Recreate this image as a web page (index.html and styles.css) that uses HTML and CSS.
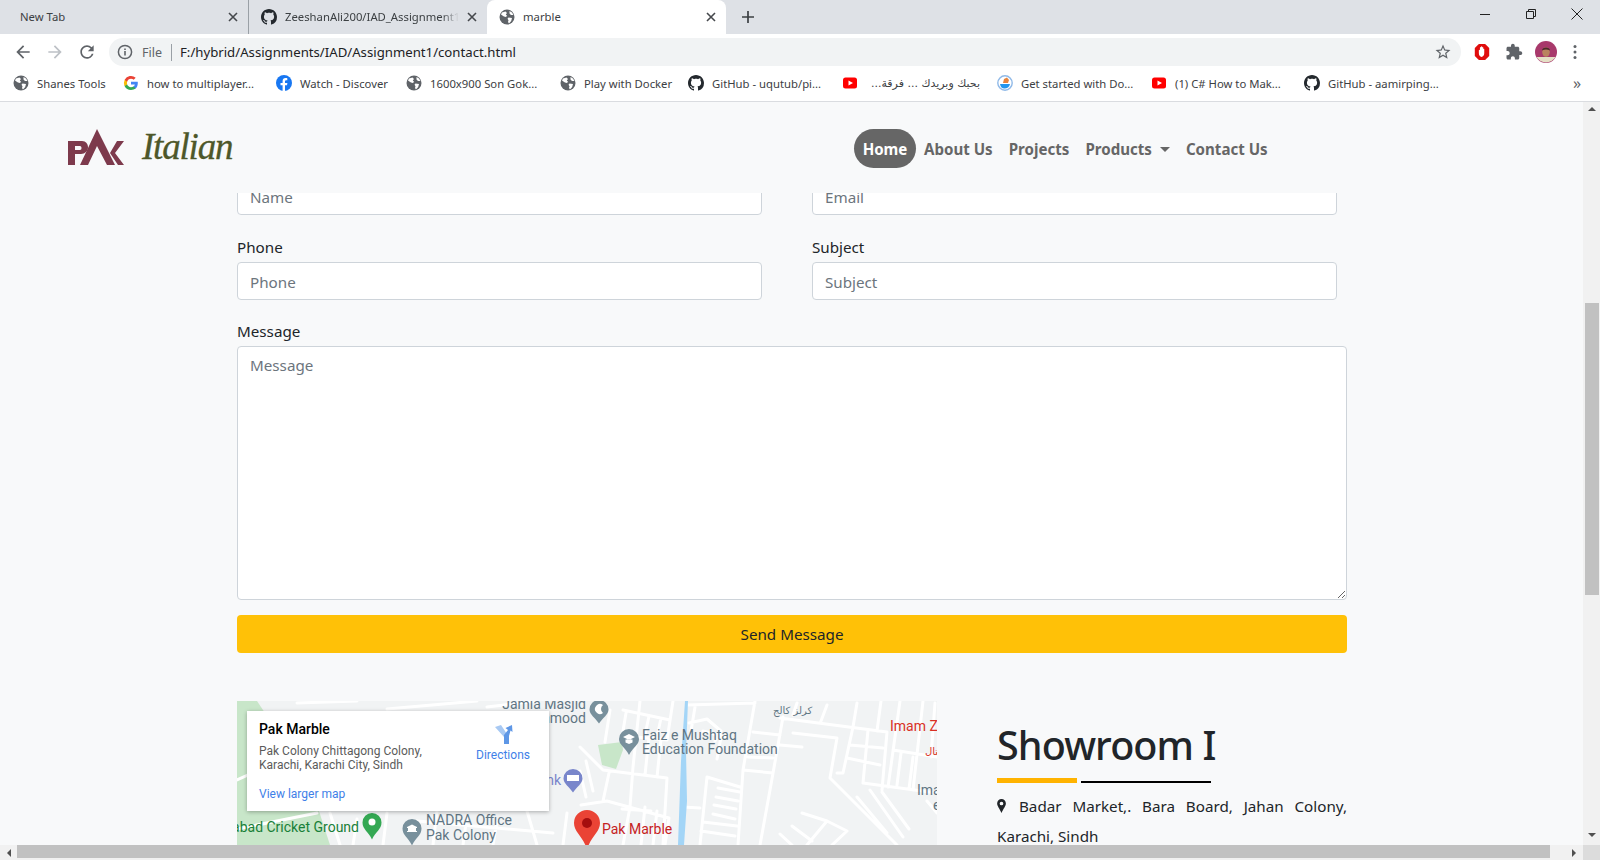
FILE: index.html
```html
<!DOCTYPE html>
<html lang="en">
<head>
<meta charset="utf-8">
<title>marble</title>
<link rel="stylesheet" href="styles.css">
</head>
<body>
<svg class="sprite" aria-hidden="true">
  <symbol id="globe" viewBox="0 0 16 16"><circle cx="8" cy="8" r="7.5" fill="#5f6368"/><path d="M3 3.500 6.500 2.500 8 4 6.800 5.500 8.200 7 6.500 8 4.500 7.200 2 5.500zM9.500 8.500 13 9 12.200 12 10 14.500 9 13 9.500 11.200 8.500 9.800zM10.500 2 13 3.500 14.500 6 12 6 10.500 4.500z" fill="#fff"/></symbol>
  <symbol id="gh" viewBox="0 0 16 16"><path fill="#24292e" d="M8 0C3.58 0 0 3.58 0 8c0 3.54 2.29 6.53 5.47 7.59.4.07.55-.17.55-.38 0-.19-.01-.82-.01-1.49-2.01.37-2.53-.49-2.69-.94-.09-.23-.48-.94-.82-1.13-.28-.15-.68-.52-.01-.53.63-.01 1.08.58 1.23.82.72 1.21 1.87.87 2.33.66.07-.52.28-.87.51-1.07-1.78-.2-3.64-.89-3.64-3.95 0-.87.31-1.59.82-2.15-.08-.2-.36-1.02.08-2.12 0 0 .67-.21 2.2.82.64-.18 1.32-.27 2-.27.68 0 1.36.09 2 .27 1.53-1.04 2.2-.82 2.2-.82.44 1.1.16 1.92.08 2.12.51.56.82 1.27.82 2.15 0 3.07-1.87 3.75-3.65 3.95.29.25.54.73.54 1.48 0 1.07-.01 1.93-.01 2.2 0 .21.15.46.55.38A8.013 8.013 0 0016 8c0-4.42-3.58-8-8-8z"/></symbol>
  <symbol id="yt" viewBox="0 0 16 16"><rect x="1" y="2.500" width="14" height="11" rx="2.500" fill="#f00"/><path d="M6.500 5.500v5L11 8z" fill="#fff"/></symbol>
  <symbol id="close" viewBox="0 0 10 10"><path d="M1 1l8 8M9 1l-8 8" stroke="#45484c" stroke-width="1.6" fill="none"/></symbol>
</svg>

<header class="browser">
  <div class="tabs">
    <div class="tab">
      <span class="tab-title">New Tab</span>
      <svg class="tab-x"><use href="#close"/></svg>
    </div>
    <div class="tab tab-sep">
      <svg class="ico16"><use href="#gh"/></svg>
      <span class="tab-title tab-fade">ZeeshanAli200/IAD_Assignment1</span>
      <svg class="tab-x"><use href="#close"/></svg>
    </div>
    <div class="tab tab-active">
      <svg class="ico16"><use href="#globe"/></svg>
      <span class="tab-title">marble</span>
      <svg class="tab-x"><use href="#close"/></svg>
    </div>
    <svg class="tab-plus" viewBox="0 0 12 12"><path d="M6 0v12M0 6h12" stroke="#3c4043" stroke-width="1.7"/></svg>
    <div class="winctl">
      <svg viewBox="0 0 12 12"><path d="M1 6.500h10" stroke="#222" stroke-width="1"/></svg>
      <svg viewBox="0 0 12 12"><path d="M1.500 3.500h7v7h-7zM3.500 3.500v-2h7v7h-2" stroke="#222" stroke-width="1" fill="none"/></svg>
      <svg viewBox="0 0 12 12"><path d="M.5.5l11 11M11.500.5l-11 11" stroke="#222" stroke-width="1" fill="none"/></svg>
    </div>
  </div>

  <div class="toolbar">
    <svg class="nav-ico" viewBox="0 0 24 24"><path fill="#5f6368" d="M20 11H7.83l5.59-5.59L12 4l-8 8 8 8 1.41-1.41L7.83 13H20v-2z"/></svg>
    <svg class="nav-ico" viewBox="0 0 24 24"><path fill="#bdc1c6" d="M4 11h12.170l-5.590-5.590L12 4l8 8-8 8-1.410-1.410L16.170 13H4v-2z"/></svg>
    <svg class="nav-ico" viewBox="0 0 24 24"><path fill="#5f6368" d="M17.65 6.35A7.958 7.958 0 0012 4c-4.42 0-7.99 3.58-7.99 8s3.57 8 7.99 8c3.73 0 6.84-2.55 7.73-6h-2.08A5.99 5.99 0 0112 18c-3.31 0-6-2.69-6-6s2.69-6 6-6c1.66 0 3.14.69 4.22 1.78L13 11h7V4l-2.35 2.35z"/></svg>
    <div class="omnibox">
      <svg class="ico16" viewBox="0 0 16 16"><circle cx="8" cy="8" r="6.600" fill="none" stroke="#5f6368" stroke-width="1.500"/><path d="M8 7v4.500M8 4.500v1.500" stroke="#5f6368" stroke-width="1.600"/></svg>
      <span class="omni-file">File</span>
      <span class="omni-sep"></span>
      <span class="omni-url">F:/hybrid/Assignments/IAD/Assignment1/contact.html</span>
      <svg class="omni-star" viewBox="0 0 24 24"><path fill="#5f6368" d="M22 9.24l-7.19-.62L12 2 9.19 8.63 2 9.24l5.46 4.73L5.82 21 12 17.27 18.18 21l-1.63-7.03L22 9.24zM12 15.4l-3.76 2.27 1-4.28-3.32-2.88 4.38-.38L12 6.1l1.71 4.04 4.38.38-3.32 2.88 1 4.28L12 15.4z"/></svg>
    </div>
    <div class="ext">
      <svg viewBox="0 0 18 20"><path d="M5.500 1h7L17 5.500v9L12.500 19h-7L1 14.500v-9z" fill="#e00d0d"/><path d="M5.500 8c0-.8 1-.8 1.200 0V5c0-.8 1.200-.8 1.200 0V4.200c0-.8 1.300-.8 1.300 0V5c0-.8 1.200-.8 1.200 0v2c0-.7 1.100-.7 1.100 0v4.500c0 2.200-1.300 4-3 4s-3-1.800-3-4z" fill="#fff"/></svg>
      <svg viewBox="0 0 24 24"><path fill="#5f6368" d="M20.5 11H19V7c0-1.100-.9-2-2-2h-4V3.500C13 2.120 11.880 1 10.500 1S8 2.120 8 3.500V5H4c-1.100 0-1.990.9-1.990 2v3.800H3.500c1.490 0 2.700 1.210 2.700 2.700s-1.210 2.700-2.700 2.700H2V20c0 1.100.9 2 2 2h3.800v-1.500c0-1.490 1.210-2.700 2.700-2.700 1.490 0 2.700 1.210 2.700 2.700V22H17c1.100 0 2-.9 2-2v-4h1.500c1.380 0 2.500-1.120 2.500-2.500S21.880 11 20.500 11z"/></svg>
      <svg class="avatar" viewBox="0 0 22 22"><circle cx="11" cy="11" r="11" fill="#a8396b"/><path d="M1.500 16h19a11 11 0 01-19 0z" fill="#e4dfc5"/><ellipse cx="11" cy="11" rx="3.800" ry="4.800" fill="#b9835f"/><path d="M7 9.500C7 5.500 15 5.500 15 9.500 12.500 8 9.500 8 7 9.500z" fill="#4a2a2a"/></svg>
      <svg class="dots" viewBox="0 0 4 16"><circle cx="2" cy="2.500" r="1.500" fill="#5f6368"/><circle cx="2" cy="8" r="1.500" fill="#5f6368"/><circle cx="2" cy="13.500" r="1.500" fill="#5f6368"/></svg>
    </div>
  </div>

  <div class="bookmarks">
    <div class="bm"><svg class="ico16"><use href="#globe"/></svg><span>Shanes Tools</span></div>
    <div class="bm"><svg class="ico16" viewBox="0 0 16 16"><path d="M14.800 8.200c0-.5 0-1-.1-1.400H8v2.700h3.800a3.300 3.300 0 01-1.400 2.100v1.800h2.300c1.300-1.300 2.100-3 2.100-5.200z" fill="#4285f4"/><path d="M8 15c1.900 0 3.500-.6 4.700-1.700l-2.300-1.800c-.6.400-1.400.7-2.400.7-1.800 0-3.400-1.200-3.900-2.900H1.700v1.900A7 7 0 008 15z" fill="#34a853"/><path d="M4.100 9.300a4.200 4.200 0 010-2.600V4.800H1.700a7 7 0 000 6.400z" fill="#fbbc05"/><path d="M8 3.800c1 0 2 .4 2.700 1l2-2A7 7 0 001.700 4.800l2.400 1.900C4.600 5 6.200 3.800 8 3.800z" fill="#ea4335"/></svg><span>how to multiplayer...</span></div>
    <div class="bm"><svg class="ico16" viewBox="0 0 16 16"><circle cx="8" cy="8" r="8" fill="#1877f2"/><path d="M11 10.300l.4-2.300H9V6.500c0-.7.300-1.300 1.300-1.300h1V3.200s-.9-.2-1.800-.2C7.700 3 6.600 4.100 6.600 6V8H4.500v2.300h2.100V16h2.400v-5.700z" fill="#fff"/></svg><span>Watch - Discover</span></div>
    <div class="bm"><svg class="ico16"><use href="#globe"/></svg><span>1600x900 Son Gok...</span></div>
    <div class="bm"><svg class="ico16"><use href="#globe"/></svg><span>Play with Docker</span></div>
    <div class="bm"><svg class="ico16"><use href="#gh"/></svg><span>GitHub - uqutub/pi...</span></div>
    <div class="bm"><svg class="ico16"><use href="#yt"/></svg><span class="bm-ar" dir="rtl">بحبك وبريدك ... فرقة...</span></div>
    <div class="bm"><svg class="ico16" viewBox="0 0 16 16"><circle cx="8" cy="8" r="7.200" fill="#fff" stroke="#8fb9e8" stroke-width="1.400"/><path d="M3 9h10c-.5 3-3 4.500-5.500 4.500S3.500 12 3 9z" fill="#2496ed"/><path d="M7 4l3-1.500L12 5l-1 3H6z" fill="#e7833c"/></svg><span>Get started with Do...</span></div>
    <div class="bm"><svg class="ico16"><use href="#yt"/></svg><span>(1) C# How to Mak...</span></div>
    <div class="bm"><svg class="ico16"><use href="#gh"/></svg><span>GitHub - aamirping...</span></div>
    <div class="bm-more">»</div>
  </div>
</header>

<div class="viewport">
  <main class="page">
    <nav class="navbar">
      <div class="brand">
        <svg class="brand-mark" viewBox="0 0 56 36"><path fill="#7d3a4c" fill-rule="evenodd" d="M0 12H14C18 12 20 15 20 18.500C20 22 17 25 13 25H7V36H0ZM7 17V21H12C14 21 14 17 12 17Z"/><path fill="#7d3a4c" d="M29 0 47 36H39L29 17 20 36H12ZM49 12H56L47 24 56 36H50L42 24Z"/></svg>
        <span class="brand-name">Italian</span>
      </div>
      <ul class="menu">
        <li class="menu-item menu-on">Home</li>
        <li class="menu-item">About Us</li>
        <li class="menu-item">Projects</li>
        <li class="menu-item menu-drop">Products</li>
        <li class="menu-item">Contact Us</li>
      </ul>
    </nav>

    <div class="content">
      <form class="form">
        <div class="two">
          <div class="clip"><input class="input" placeholder="Name"></div>
          <div class="clip"><input class="input" placeholder="Email"></div>
        </div>
        <div class="two two-phone">
          <div><label class="label">Phone</label><input class="input" placeholder="Phone"></div>
          <div><label class="label">Subject</label><input class="input" placeholder="Subject"></div>
        </div>
        <label class="label label-msg">Message</label>
        <textarea class="input area" placeholder="Message"></textarea>
        <button class="send" type="button">Send Message</button>
      </form>

      <section class="showroom">
        <div class="map">
          <svg class="map-svg" viewBox="0 0 700 144">
            <rect width="700" height="144" fill="#f1f3f4"/>
            <path d="M0 0H20L60 60 82 110 93 144H0z" fill="#c8e6c9"/>
            <path d="M361 44 385 41 386 49 379 68 365 64z" fill="#c8e6c9"/>
            <path class="road-edge" d="M518 0 506 69 501 144M546 16 533 89 523 144M543 17 650 31 645 89M450 4 518 2M556 32 600 37 593 77 660 144M543 44 565 46M506 69 536 72M516 31 543 34M511 56 536 57M616 26 606 72 600 72M613 44 646 47M610 57 643 64M626 82 700 92M631 29 626 82M663 0 651 86M686 0 676 89M656 49 700 56M620 96 650 132M633 89 666 136M645 91 672 128M343 46 366 69 430 77 426 144M373 9 368 41M403 0 396 66 393 106 386 144M436 0 430 39 400 36M386 9 433 19M470 76 463 144M470 76 503 86M481 87 503 91M479 96 501 100M477 104 499 108M476 113 498 118M466 121 500 125M464 130 498 135M446 106 463 107M344 104 370 100 432 117 428 144M385 108 414 110M565 112 590 120 570 144M555 125 575 140M590 120 610 130 595 144M543 133 555 144M690 100 700 112M0 79 20 70M0 128 80 112M93 112 103 144M200 110 196 144M230 115 226 144M260 120 256 144M290 110 300 144M180 120 316 132M60 2 120 0M150 8 240 0M250 6 300 0M349 60 356 90M343 70 349 96M372 72 366 100M412 36 408 74M424 38 420 76M389 12 385 36M412 15 408 34M424 17 420 36M452 22 470 18 484 30 478 40M458 6 454 30M466 30 488 36M484 36 480 58M620 2 616 26M644 0 640 30M698 2 694 56M560 2 556 14M590 4 584 20M408 106 404 144M420 110 416 144M664 52 660 84M676 56 672 88M120 118 116 144M150 112 146 144M330 112 326 144"/>
            <path d="M448 0 451 0 449 50 450 100 447 144H441L444 60z" fill="#a3d5f7"/>
            <text class="t-gray" x="349" y="8" text-anchor="end">Jamia Masjid</text>
            <text class="t-gray" x="349" y="22" text-anchor="end">Mahmood</text>
            <path class="pin-gray" d="M362 -1a9.500 9.500 0 019.500 9.500c0 5-5.500 8-9.500 14-4-6-9.500-9-9.500-14A9.500 9.500 0 01362 -1z"/>
            <path d="M366 4a5 5 0 100 8 5 5 0 010-8z" fill="#fff"/>
            <path class="pin-gray" d="M392 28a10 10 0 0110 10c0 6-6 8-10 16-4-8-10-10-10-16a10 10 0 0110-10z"/>
            <path d="M386 36l6-3 6 3-6 3zM388.500 38.500v3l3.500 1.500 3.500-1.500v-3" fill="#fff"/>
            <text class="t-gray" x="405" y="39">Faiz e Mushtaq</text>
            <text class="t-gray" x="405" y="53">Education Foundation</text>
            <text class="t-red" x="653" y="30">Imam Z</text>
            <text class="t-ar t-ar-red" x="688" y="54">ستال</text>
            <text class="t-ar" x="536" y="13">كرلز كالج</text>
            <text class="t-gray" x="680" y="94">Ima</text>
            <text class="t-gray" x="696" y="109">e</text>
            <text class="t-blue" x="324" y="84" text-anchor="end">Bank</text>
            <path d="M336 68a9.500 9.500 0 019.500 9.500c0 5-5.500 8-9.500 14-4-6-9.500-9-9.500-14a9.500 9.500 0 019.500-9.500z" fill="#7986cb"/>
            <rect x="330" y="74" width="12" height="6" fill="#fff"/>
            <text class="t-green" x="122" y="131" text-anchor="end">Islamabad Cricket Ground</text>
            <path d="M135 112a9.500 9.500 0 019.500 9.500c0 7-6 9-9.500 17-3.500-8-9.500-10-9.500-17a9.500 9.500 0 019.500-9.500z" fill="#34a853"/>
            <circle cx="135" cy="121" r="3.500" fill="#fff"/>
            <path class="pin-gray" d="M175 118a9.500 9.500 0 019.500 9.500c0 7-6 9-9.500 17-3.500-8-9.500-10-9.500-17a9.500 9.500 0 019.500-9.500z"/>
            <path d="M170 131v-1h1v-3h-1v-1l5-2.500 5 2.500v1h-1v3h1v1z" fill="#fff"/>
            <text class="t-gray" x="189" y="124">NADRA Office</text>
            <text class="t-gray" x="189" y="139">Pak Colony</text>
            <path d="M350 109a13 13 0 0113 13c0 9-8 12-13 26-5-14-13-17-13-26a13 13 0 0113-13z" fill="#ea4335"/>
            <circle cx="350" cy="122" r="5" fill="#a50e0e"/>
            <text class="t-mark" x="365" y="133">Pak Marble</text>
          </svg>
          <div class="card">
            <div class="card-main">
              <div class="card-title">Pak Marble</div>
              <div class="card-addr">Pak Colony Chittagong Colony,<br>Karachi, Karachi City, Sindh</div>
              <div class="card-link">View larger map</div>
            </div>
            <div class="card-dir">
              <svg class="dir-ico" viewBox="0 0 20 20"><path d="M2 3 8 1 16 13V20H11V13z" fill="#a8c9f3"/><path d="M11 20V11L15 6 12.500 4 19 1 19.500 8 17.500 6.500 16 12V20z" fill="#5e97e6"/></svg>
              <div>Directions</div>
            </div>
          </div>
        </div>
        <div class="info">
          <h2 class="info-title">Showroom I</h2>
          <div class="rule"><span class="rule-a"></span><span class="rule-b"></span></div>
          <p class="addr"><svg class="addr-pin" viewBox="0 0 10 16"><path fill-rule="evenodd" fill="#212529" d="M5 0a5 5 0 015 5c0 3-3 6-5 11C3 11 0 8 0 5a5 5 0 015-5zm0 3a2 2 0 100 4.200A2 2 0 005 3z"/></svg>Badar Market,. Bara Board, Jahan Colony, Karachi, Sindh</p>
        </div>
      </section>
    </div>
  </main>
  <div class="vbar">
    <span class="arr arr-up"></span>
    <span class="vthumb"></span>
    <span class="arr arr-down"></span>
  </div>
</div>
<div class="hbar">
  <span class="harr"><span class="arr arr-left"></span></span>
  <span class="hthumb"></span>
  <span class="harr harr-r"><span class="arr arr-right"></span></span>
  <span class="corner"></span>
</div>
</body>
</html>
```

FILE: styles.css
```css
* { box-sizing: border-box; }
html, body { margin: 0; height: 860px; overflow: hidden; }
body { font-family: "Noto Sans", "Open Sans", sans-serif; color: #212529; background: #f8f9fa; display: flex; flex-direction: column; }
.sprite { display: none; }
.ico16 { width: 16px; height: 16px; flex: none; }

/* browser chrome */
.browser { flex: none; height: 102px; background: #fff; font-size: 11.3px; color: #3c4043; }
.tabs { height: 34px; background: #dee1e6; display: flex; align-items: stretch; }
.tab { width: 239px; display: flex; align-items: center; gap: 8px; padding: 0 10px 1px 12px; position: relative; }
.tab:first-child { width: 248px; padding-left: 20px; }
.tab-sep { border-left: 1px solid #9aa0a6; background-clip: padding-box; }
.tab-title { flex: 1; min-width: 0; white-space: nowrap; overflow: hidden; }
.tab-fade { -webkit-mask-image: linear-gradient(90deg, #000 90%, transparent); mask-image: linear-gradient(90deg, #000 90%, transparent); }
.tab-x { width: 10px; height: 10px; flex: none; }
.tab-active { background: #fff; border-radius: 8px 8px 0 0; }
.tab-plus { width: 12px; height: 12px; align-self: center; margin-left: 16px; }
.winctl { margin-left: auto; display: flex; align-items: center; gap: 34px; padding: 0 17px 6px 0; }
.winctl svg { width: 12px; height: 12px; }

.toolbar { height: 33px; display: flex; align-items: center; padding: 3px 13px 0; }
.nav-ico { width: 20px; height: 20px; margin-right: 12px; flex: none; }
.omnibox { width: 1352px; height: 28px; background: #f1f3f4; border-radius: 14px; display: flex; align-items: center; padding: 0 9px 0 8px; }
.omni-file { margin-left: 9px; color: #5f6368; font-size: 12.5px; }
.omni-sep { width: 1px; height: 17px; background: #9aa0a6; margin: 0 8px 0 9px; }
.omni-url { flex: 1; color: #202124; font-size: 13.2px; }
.omni-star { width: 18px; height: 18px; }
.ext { display: flex; align-items: center; margin-left: 12px; }
.ext svg { width: 18px; height: 18px; margin-right: 14px; flex: none; }
.ext .avatar { width: 22px; height: 22px; margin-right: 16px; margin-left: -2px; }
.ext .dots { width: 4px; height: 16px; margin: 0; }

.bookmarks { height: 35px; padding: 0 0 2px 13px; display: grid; grid-template-columns: 110px 153px 130px 154px 128px 154px 155px 154px 153px 265px 16px; align-items: center; border-bottom: 1px solid #dadce0; }
.bm { display: flex; align-items: center; gap: 8px; white-space: nowrap; min-width: 0; overflow: hidden; }
.bm-ar { width: 110px; font-family: "DejaVu Sans", sans-serif; font-size: 11px; margin-left: 4px; }
.bm-more { font-size: 16px; color: #5f6368; text-align: center; line-height: 1; }

/* viewport */
.viewport { flex: none; height: 743px; display: flex; }
.page { flex: 1; min-width: 0; overflow: hidden; background: #f8f9fa; }
.vbar { flex: none; width: 17px; background: #f1f1f1; display: flex; flex-direction: column; align-items: center; padding-top: 5px; }
.vthumb { width: 14px; height: 292px; margin-top: 192px; background: #c1c1c1; }
.arr { display: block; width: 0; height: 0; border: 4px solid transparent; }
.arr-up { border-bottom-color: #505050; border-top-width: 0; }
.arr-down { border-top-color: #505050; border-bottom-width: 0; margin-top: auto; margin-bottom: 8px; }
.arr-left { border-right-color: #505050; border-left-width: 0; }
.arr-right { border-left-color: #505050; border-right-width: 0; }
.hbar { flex: none; height: 15px; background: #f1f1f1; display: flex; align-items: stretch; }
.harr { width: 17px; display: flex; align-items: center; justify-content: center; flex: none; }
.harr-r { width: 33px; padding-left: 15px; }
.hthumb { width: 1533px; height: 13px; background: #c1c1c1; flex: none; }
.corner { flex: none; width: 17px; background: #dcdcdc; }

/* navbar */
.navbar { height: 91px; display: flex; align-items: flex-start; padding-left: 68px; }
.brand { width: 165px; display: flex; align-items: center; gap: 18px; margin-top: 27px; }
.brand-mark { width: 56px; height: 36px; flex: none; }
.brand-name { font-family: "Liberation Serif", serif; font-style: italic; font-size: 37px; letter-spacing: -1.2px; line-height: 34px; color: #4d5729; -webkit-text-stroke: .3px #4d5729; }
.menu { list-style: none; margin: 27px 0 0 621px; padding: 0; display: flex; font-weight: 700; font-size: 15.1px; color: #666; }
.menu-item { height: 39px; line-height: 40px; padding: 0 8px; white-space: nowrap; }
.menu-on { background: #666; color: #fff; border-radius: 20px; min-width: 62px; text-align: center; }
.menu-drop::after { content: ""; display: inline-block; margin-left: 8px; vertical-align: 3px; border: 5px solid transparent; border-top-color: #666; border-bottom-width: 0; }

/* form */
.content { padding-left: 237px; box-sizing: content-box; width: 1110px; }
.form { display: flex; flex-direction: column; }
.two { display: grid; grid-template-columns: 525px 525px; column-gap: 50px; }
.two-phone { margin-top: 20px; }
.clip { height: 22px; overflow: hidden; display: flex; align-items: flex-end; }
.label { display: block; font-size: 15.2px; line-height: 24px; margin-bottom: 3px; }
.label-msg { margin-top: 19px; margin-bottom: 3px; }
.input { display: block; flex: none; width: 100%; height: 38px; padding: 7px 12px 5px; border: 1px solid #ced4da; border-radius: 4px; background: #fff; font: 15.2px/24px "Noto Sans", sans-serif; color: #495057; outline: 0; }
.input::placeholder { color: #6c757d; opacity: 1; }
.area { height: 254px; padding: 6px 12px; }
.send { margin-top: 15px; height: 38px; width: 100%; border: 0; border-radius: 4px; background: #ffc107; color: #212529; font: 15.2px "Noto Sans", sans-serif; }

/* showroom */
.showroom { display: grid; grid-template-columns: 700px 350px; column-gap: 60px; margin-top: 48px; }
.map { position: relative; height: 144px; overflow: hidden; }
.map-svg { display: block; width: 700px; height: 144px; }
.road-edge { fill: none; stroke: #fff; stroke-width: 3; stroke-linejoin: round; stroke-linecap: round; }
.map-svg text { font-family: Roboto, sans-serif; font-size: 14px; }
.t-gray { fill: #5f7583; }
.t-red { fill: #d93025; }
.t-blue { fill: #7986cb; }
.t-green { fill: #188038; }
.t-mark { fill: #c5221f; }
.map-svg .t-ar { font-family: "DejaVu Sans", sans-serif; font-size: 10px; fill: #5f7583; }
.map-svg .t-ar-red { fill: #d93025; }
.pin-gray { fill: #78909c; }
.card { position: absolute; left: 10px; top: 10px; width: 302px; height: 100px; background: #fff; box-shadow: 0 1px 4px rgba(0,0,0,.3); display: flex; justify-content: space-between; padding: 9px 12px 0; font-family: Roboto, sans-serif; font-size: 12px; }
.card-title { font-size: 14px; font-weight: 500; color: #000; line-height: 18px; }
.card-addr { color: #5b5b5b; line-height: 14px; margin-top: 6px; }
.card-link { color: #3f7fe8; margin-top: 15px; line-height: 14px; }
.card-dir { color: #3f7fe8; text-align: center; width: 70px; margin-right: -1px; }
.dir-ico { display: block; width: 20px; height: 20px; margin: 4px auto 4px; }

.info { min-width: 0; }
.info-title { margin: 20px 0 0; font-size: 39.5px; letter-spacing: -.9px; font-weight: 500; line-height: 48px; color: #212529; }
.rule { display: flex; align-items: flex-end; gap: 4px; margin-top: 9px; }
.rule-a { width: 80px; height: 5px; background: #ffb300; }
.rule-b { width: 130px; height: 2px; background: #000; }
.addr { margin: 8px 0 0; font-size: 15.2px; line-height: 30px; text-align: justify; }
.addr-pin { width: 9px; height: 14px; margin-right: 13px; vertical-align: -1px; }
```
